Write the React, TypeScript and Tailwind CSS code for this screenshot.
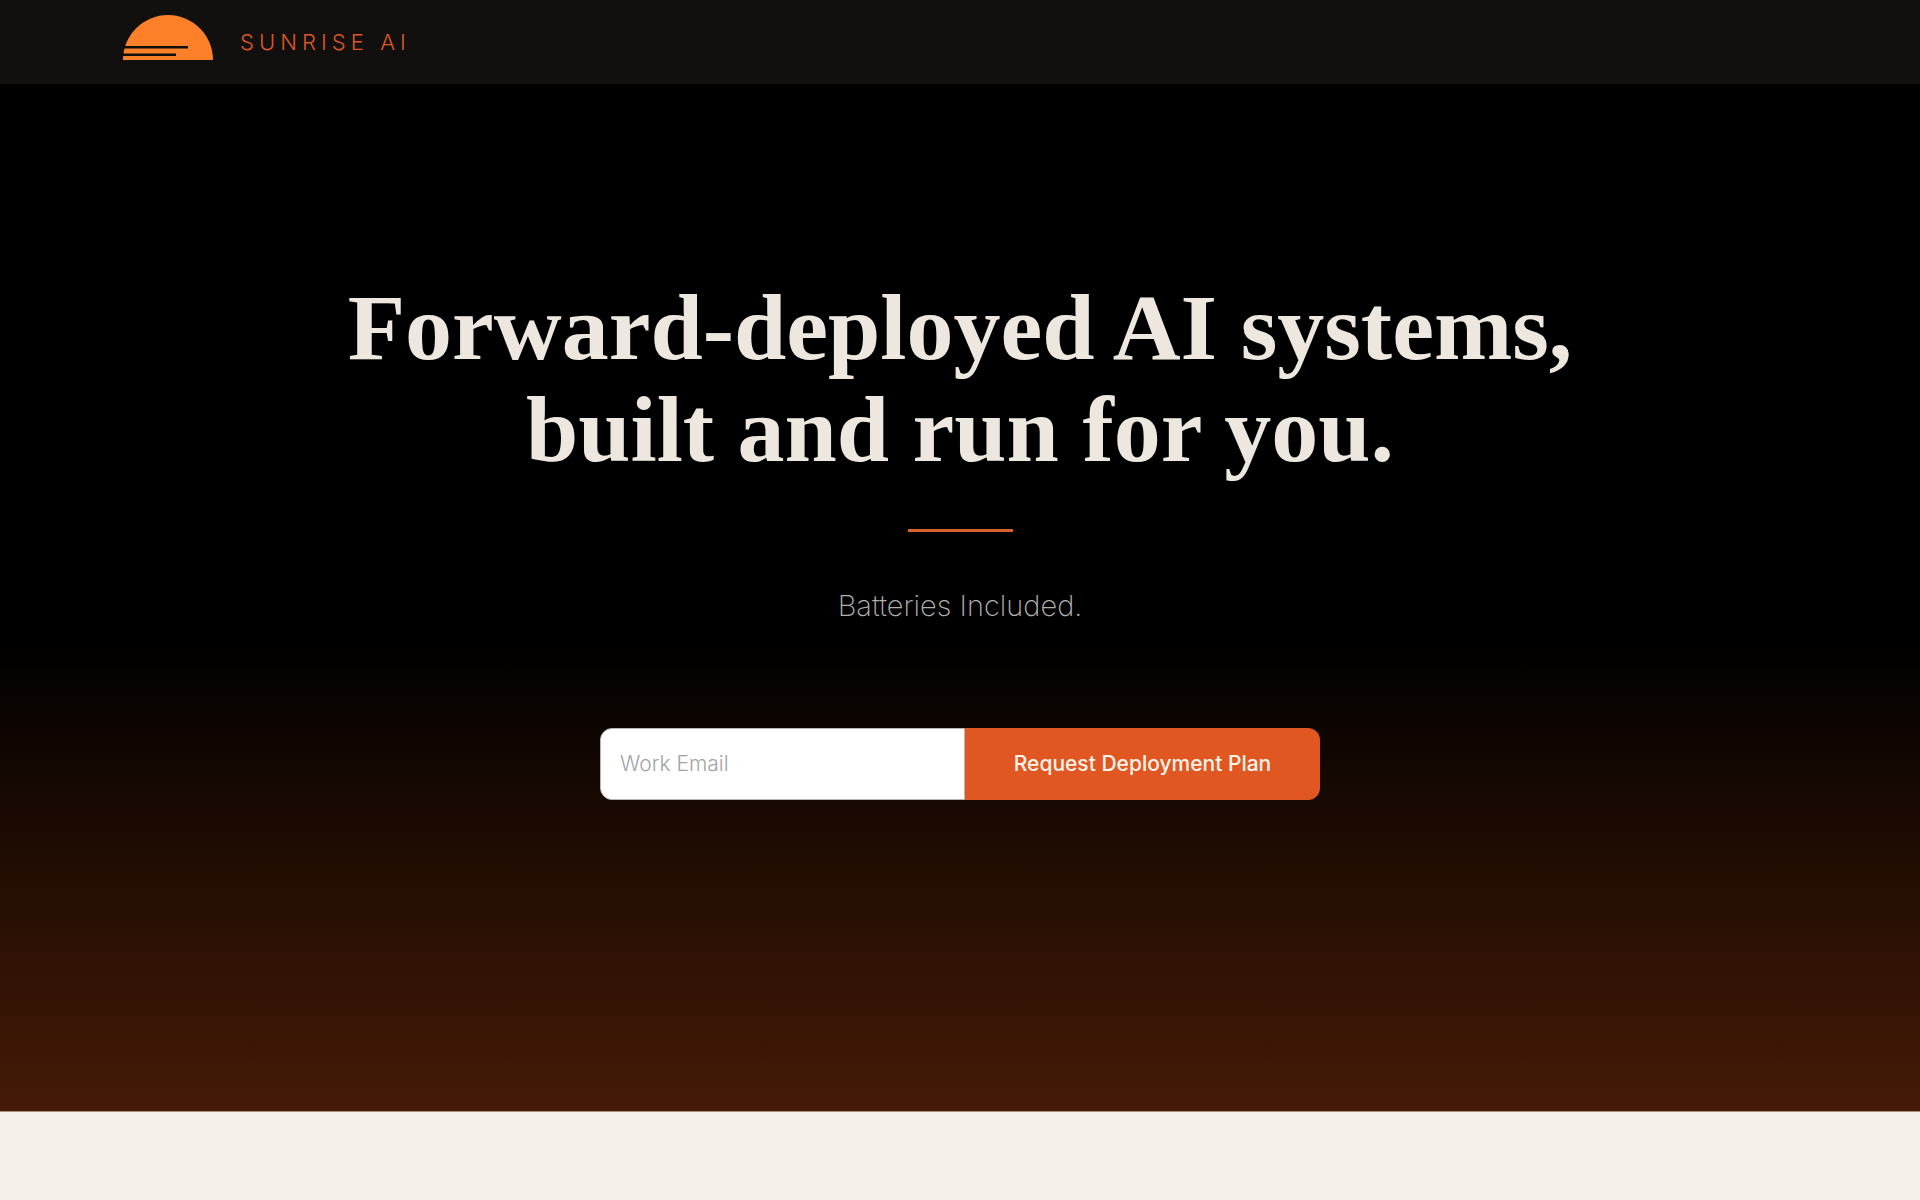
function Logo() {
  return (
    <svg viewBox="0 0 90 45" className="h-[45px] w-[90px]" aria-hidden="true">
      <path d="M0 45A45 45 0 0 1 90 45Z" fill="#fb8029" />
      <path d="M0 31H65V33.5H0ZM0 38.5H53V41H0Z" fill="#11100e" />
    </svg>
  );
}

export default function App() {
  return (
    <div className="min-h-screen bg-[#f5efe9] font-['Inter',sans-serif]">
      <header className="flex h-[84px] items-center bg-[#11100e] px-6 pb-[9px] lg:px-[123px]">
        <a href="#" className="flex items-start gap-[27px]">
          <Logo />
          <span className="pt-[11px] text-[22px] leading-8 font-light tracking-[0.23em] text-[#dc5725]">SUNRISE AI</span>
        </a>
      </header>
      <main>
        <section className="flex flex-col items-center border-b border-[#a98c7c] bg-linear-to-b/srgb from-black from-54% to-[#451a06] px-6 pt-[192px] pb-[311px] text-center">
          <h1 className="font-['Liberation_Serif',serif] text-[94px] leading-[102px] font-bold text-[#ede7df]">
            Forward-deployed AI systems,
            <br />
            built and run for you.
          </h1>
          <div className="mt-[49px] h-[3px] w-[105px] bg-[#d9622b]" />
          <p className="mt-[54px] text-[29px] leading-10 font-extralight text-[#b3b1ae]">Batteries Included.</p>
          <form className="mt-[102px] flex h-[72px] w-full max-w-[720px]" onSubmit={(e) => e.preventDefault()}>
            <input
              type="email"
              aria-label="Work Email"
              placeholder="Work Email"
              className="w-[365px] min-w-0 rounded-l-xl border border-[#b8b4b0] bg-white px-[19px] text-[21px] font-light text-black outline-none placeholder:text-[#a3a3a3]"
            />
            <button type="submit" className="flex-1 rounded-r-xl bg-[#e15722] text-[21px] font-medium text-[#fdf3ea]">
              Request Deployment Plan
            </button>
          </form>
        </section>
      </main>
    </div>
  );
}
